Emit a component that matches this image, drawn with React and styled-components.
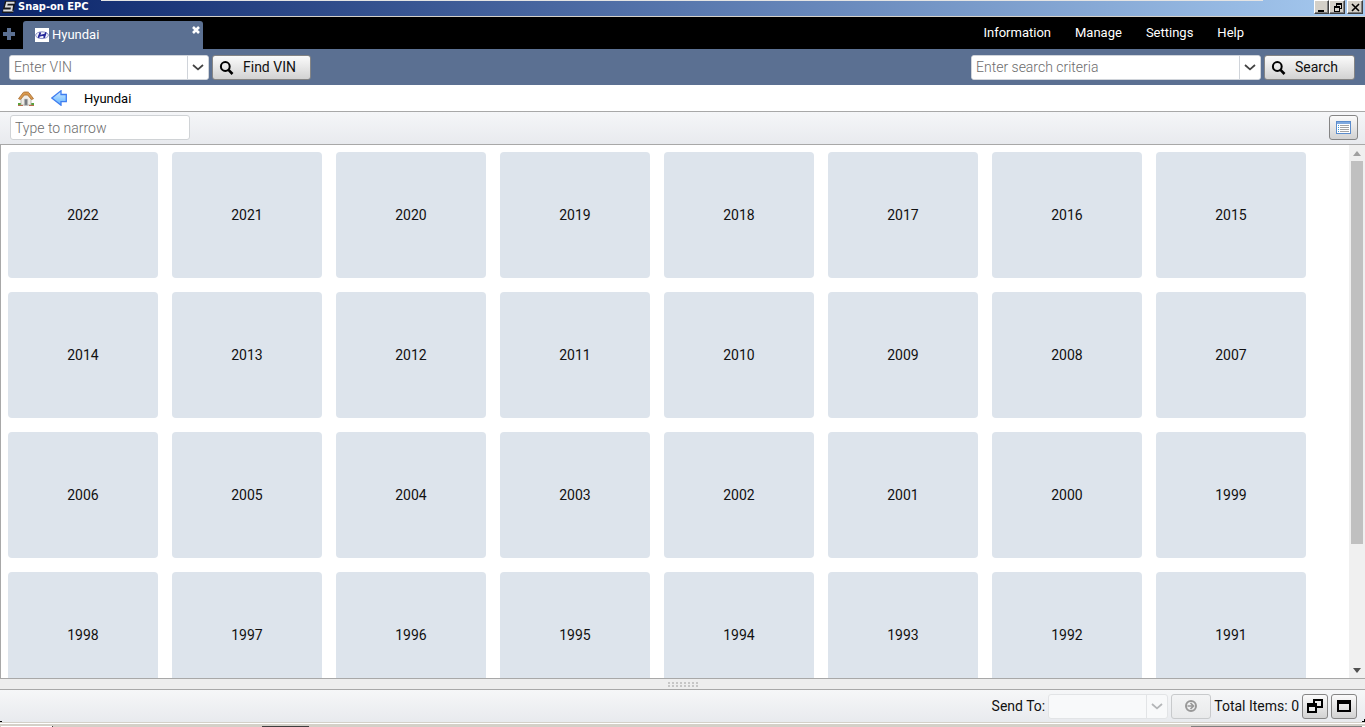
import React from "react";
import styled, { createGlobalStyle, css } from "styled-components";

const GlobalStyle = createGlobalStyle`
  * { box-sizing: border-box; }
  html, body { margin: 0; height: 100%; overflow: hidden; }
  body, button, input, select {
    font-family: Roboto, "Liberation Sans", Arial, sans-serif;
    font-size: 14px;
    color: #111;
  }
  button { padding: 0; cursor: pointer; }
  svg { display: block; flex: none; }
`;

const Window = styled.div`
  display: flex;
  flex-direction: column;
  height: 100vh;
  background: #fff;
`;

const TitleBar = styled.header`
  display: flex;
  align-items: center;
  flex: none;
  height: 17px;
  padding: 0 2px 2px 2px;
  border-bottom: 1px solid #d4d0c8;
  background:
    linear-gradient(#e4e4e4, #e4e4e4) 101px 0 / calc(100% - 203px) 1px no-repeat,
    linear-gradient(90deg, #0a246a, #a6caf0);
`;

const Title = styled.h1`
  flex: 1;
  margin: 0 0 0 2px;
  font: bold 11px/16px "DejaVu Sans Condensed", "DejaVu Sans", sans-serif;
  color: #fff;
`;

const WindowButton = styled.button`
  display: grid;
  place-items: center;
  width: ${(p) => (p.$narrow ? "15px" : "16px")};
  height: 14px;
  margin-left: ${(p) => (p.$apart ? "2px" : "0")};
  border: 1px solid;
  border-color: #fff #404040 #404040 #fff;
  box-shadow: inset -1px -1px 0 #808080;
  background: #d4d0c8;
`;

const TabBar = styled.div`
  display: flex;
  align-items: flex-end;
  flex: none;
  height: 32px;
  background: #000;
`;

const AddTab = styled.button`
  display: grid;
  place-items: center start;
  width: 23px;
  height: 30px;
  padding-left: 3px;
  border: 0;
  background: none;
`;

const Tab = styled.div`
  display: flex;
  gap: 3px;
  width: 180px;
  height: 28px;
  padding: 7px 3px 0 12px;
  border-radius: 3px 3px 0 0;
  background: #5b7092;
`;

const TabName = styled.span`
  flex: 1;
  line-height: 14px;
  font-size: 13px;
  color: #fff;
`;

const CloseTab = styled.button`
  align-self: flex-start;
  height: 8px;
  margin-top: -2px;
  border: 0;
  background: none;
`;

const Menu = styled.nav`
  display: flex;
  gap: 24px;
  margin-left: auto;
  padding-right: 121px;
  height: 32px;
  line-height: 32px;
`;

const MenuLink = styled.a`
  font-size: 13px;
  color: #fff;
  text-decoration: none;
`;

const Toolbar = styled.div`
  display: flex;
  justify-content: space-between;
  flex: none;
  height: 36px;
  padding: 6px 10px 5px 9px;
  background: #5b7092;
`;

const SearchForm = styled.form`
  display: flex;
  gap: 3px;
`;

const ComboBox = styled.div`
  position: relative;
  display: flex;
  width: ${(p) => p.$width};
  height: 25px;
  border: 1px solid ${(p) => (p.$disabled ? "#e2e4e6" : "#d0d4da")};
  border-radius: 3px;
  background: ${(p) => (p.$disabled ? "#f8f9fa" : "#fff")};
  overflow: hidden;
`;

const fieldStyle = css`
  min-width: 0;
  padding: 0 4px;
  outline: none;
  background: #fff;
  font-weight: 300;
  &::placeholder { color: #6c6c6c; opacity: 1; }
`;

const ComboInput = styled.input`
  ${fieldStyle}
  flex: 1;
  padding-bottom: 2px;
  border: 0;
`;

const DropButton = styled.button`
  display: grid;
  place-items: center;
  width: 21px;
  border: 0;
  border-left: 1px solid #d0d4da;
  background: #fff;
`;

const Button = styled.button`
  display: flex;
  align-items: center;
  justify-content: ${(p) => (p.$labelled ? "flex-start" : "center")};
  gap: 9px;
  width: ${(p) => p.$width};
  height: 25px;
  padding: ${(p) => (p.$labelled ? "0 0 1px 6px" : "0")};
  border: 1px solid ${(p) => (p.disabled ? "#c8cacc" : "#858585")};
  border-radius: 3px;
  background: ${(p) =>
    p.disabled ? "linear-gradient(#f3f4f5, #e9eaeb)" : "linear-gradient(#fbfbfb, #d2d2d2)"};
`;

const Breadcrumbs = styled.nav`
  display: flex;
  align-items: center;
  gap: 17px;
  flex: none;
  height: 27px;
  padding-left: 18px;
  border-bottom: 1px solid #a8a8a8;
  font-size: 13px;
`;

const CrumbLink = styled.a`
  color: #000;
  text-decoration: none;
`;

const FilterBar = styled.div`
  display: flex;
  align-items: flex-start;
  justify-content: space-between;
  flex: none;
  height: 33px;
  padding: 3px 7px 0 10px;
  border-bottom: 1px solid #a8a8a8;
  background: linear-gradient(#f5f6f8, #e8eaee);
`;

const FilterInput = styled.input`
  ${fieldStyle}
  width: 180px;
  height: 25px;
  border: 1px solid #d0d3d6;
  border-radius: 3px;
`;

const Content = styled.main`
  display: flex;
  flex: 1;
  min-height: 0;
  border-left: 1px solid #a8a8a8;
`;

const YearGrid = styled.div`
  display: grid;
  grid-template-columns: repeat(auto-fill, 150px);
  grid-auto-rows: 126px;
  gap: 14px;
  flex: 1;
  padding: 7px;
  overflow: hidden;
`;

const YearTile = styled.button`
  border: 0;
  border-radius: 4px;
  background: #dde4ec;
`;

const ScrollBar = styled.div`
  display: flex;
  flex-direction: column;
  width: 16px;
  background: #f0f0f0;
`;

const ScrollArrow = styled.span`
  display: grid;
  place-items: center;
  height: 16px;
`;

const ScrollTrack = styled.div`
  flex: 1;
  padding: 0 2px;
`;

const ScrollThumb = styled.div`
  height: 76.4%;
  background: #c0c0c0;
`;

const Splitter = styled.div`
  display: grid;
  place-items: center;
  flex: none;
  height: 12px;
  border: solid #a8a8a8;
  border-width: 1px 0;
  background: #ededed;
`;

const StatusBar = styled.footer`
  display: flex;
  align-items: center;
  justify-content: flex-end;
  gap: 3px;
  flex: none;
  height: 32px;
  padding-right: 8px;
  background:
    linear-gradient(#000, #000) 0 100% / 2px 1px no-repeat,
    linear-gradient(#000, #000) 100% 100% / 3px 1px no-repeat,
    linear-gradient(#000, #000) 100% calc(100% - 1px) / 1px 2px no-repeat,
    linear-gradient(#f6f7f8, #e8eaee);
`;

const SendSelect = styled.select`
  width: 100%;
  border: 0;
  background: transparent;
  appearance: none;
`;

const DropMark = styled.span`
  position: absolute;
  top: 0;
  right: 0;
  display: grid;
  place-items: center;
  width: 21px;
  height: 23px;
  border-left: 1px solid #e2e4e6;
  pointer-events: none;
`;

const Taskbar = styled.div`
  display: flex;
  align-items: flex-end;
  flex: none;
  height: 5px;
  border-top: 1px solid #d4d0c8;
  box-shadow: inset 0 1px 0 #fff;
  background: #d4d0c8;
`;

const TaskEdge = styled.span`
  width: ${(p) => p.$width};
  height: 1px;
  margin-left: ${(p) => p.$start || "0"};
  background: ${(p) => p.$color};
`;

const Chevron = ({ color = "#444" }) => (
  <svg width="12" height="7" viewBox="0 0 12 7" fill="none" stroke={color} strokeWidth="1.8">
    <path d="M1 1l5 4.4L11 1" />
  </svg>
);

const Magnifier = () => (
  <svg width="15" height="15" viewBox="0 0 15 15" fill="none" stroke="#000">
    <circle cx="6.3" cy="6.5" r="4.4" strokeWidth="2" />
    <path d="M9.5 9.8l4 4.2" strokeWidth="2.6" />
  </svg>
);

const AppLogo = () => (
  <svg width="14" height="12" viewBox="0 0 14 12">
    <path d="M3 0h11l-3 12H0z" fill="#17181c" />
    <path d="M12.5 1.7H5L4 5.5h6L9.4 9.5H1.2" fill="none" stroke="#ddd" strokeWidth="1.9" />
    <path d="M10 10.3h1.5" stroke="#999" />
  </svg>
);

const HyundaiLogo = () => (
  <svg width="14" height="14" viewBox="0 0 14 14">
    <path fill="#fff" d="M0 0h14v14H0z" />
    <ellipse cx="7" cy="7.2" rx="6.4" ry="3.4" fill="#eef0fb" stroke="#8b92c4" strokeWidth="1" />
    <path d="M5.4 4.4L3.4 9.9M10.9 4.4L8.9 9.9M3.2 7.9C6 8.2 8 6.2 11 6.6" fill="none" stroke="#25289a" strokeWidth="1.7" />
  </svg>
);

const House = () => (
  <svg width="16" height="16" viewBox="0 0 16 16">
    <path d="M0 13h5v3H0zM11 13h5v3h-5z" fill="#58a33c" />
    <path d="M3 7l5-4 5 4v8H3z" fill="#f1eee8" stroke="#aaa69d" strokeWidth=".8" />
    <path d="M6.3 9h3.4v6.4H6.3z" fill="#777b80" stroke="#c8c8c8" strokeWidth=".6" />
    <path d="M.5 8.7L5 2.8Q5.4 2 6.5 2h3Q10.5 2 11 2.8l4.5 5.9-2 .8L9.6 5H6.4l-4 4.5z" fill="#d99a50" stroke="#a66a2c" strokeWidth=".8" />
    <path d="M0 15.5h5M11 15.5h5" stroke="#b96c4f" />
  </svg>
);

const BackArrow = () => (
  <svg width="16" height="16" viewBox="0 0 16 16">
    <defs>
      <linearGradient id="arrowFill" x2="0" y2="1">
        <stop stopColor="#d3edff" />
        <stop offset="1" stopColor="#5eb2ff" />
      </linearGradient>
    </defs>
    <path d="M.8 8L10 .8V4.5h5.3v7.2H10v3.5z" fill="url(#arrowFill)" stroke="#3f7df0" strokeWidth="1.3" />
  </svg>
);

const ListView = () => (
  <svg width="15" height="13" viewBox="0 0 15 13" shapeRendering="crispEdges">
    <path d="M0 0h15v13H0z" fill="#5b8ccc" />
    <path d="M1 3h13v9H1z" fill="#fff" />
    <path d="M1 1h13v2H1z" fill="#7fa9df" />
    <path d="M2 4.5h1M2 6.5h1M2 8.5h1M2 10.5h1" stroke="#3b9ade" />
    <path d="M4 4.5h9M4 6.5h9M4 8.5h9M4 10.5h9" stroke="#a3a3a3" />
  </svg>
);

const GoArrow = () => (
  <svg width="12" height="12" viewBox="0 0 12 12" fill="none" stroke="#989898" strokeWidth="2">
    <circle cx="6" cy="6" r="5" />
    <path d="M2.5 6h6M5.5 3L8.5 6l-3 3" strokeWidth="1.7" />
  </svg>
);

const Cascade = () => (
  <svg width="16" height="14" viewBox="0 0 16 14" shapeRendering="crispEdges">
    <path fillRule="evenodd" d="M6 0h10v9H6zM8 2v5h6V2z" />
    <path d="M0 4h10v10H0z" />
    <path d="M2 8h6v4H2z" fill="#ececec" />
  </svg>
);

const Maximize = () => (
  <svg width="14" height="12" viewBox="0 0 14 12" shapeRendering="crispEdges">
    <path fillRule="evenodd" d="M0 0h14v12H0zM2 4v6h10V4z" />
  </svg>
);

const Grip = () => (
  <svg width="30" height="5" viewBox="0 0 30 5" shapeRendering="crispEdges">
    <path d="M0 1h30M0 4h30" stroke="#c6c6c6" strokeWidth="2" strokeDasharray="2 2" />
  </svg>
);

const years = Array.from({ length: 32 }, (_, i) => 2022 - i);
const menuItems = ["Information", "Manage", "Settings", "Help"];

const SearchBox = ({ placeholder, action, boxWidth, buttonWidth }) => (
  <SearchForm onSubmit={(e) => e.preventDefault()}>
    <ComboBox $width={boxWidth}>
      <ComboInput type="text" aria-label={placeholder} placeholder={placeholder} />
      <DropButton type="button" aria-label="Show history"><Chevron /></DropButton>
    </ComboBox>
    <Button type="submit" $labelled $width={buttonWidth}><Magnifier />{action}</Button>
  </SearchForm>
);

export default function App() {
  return (
    <Window>
      <GlobalStyle />
      <TitleBar>
        <AppLogo />
        <Title>Snap-on EPC</Title>
        <WindowButton $narrow aria-label="Minimize">
          <svg width="9" height="9" shapeRendering="crispEdges"><path d="M1 7h6v2H1z" /></svg>
        </WindowButton>
        <WindowButton aria-label="Restore">
          <svg width="9" height="9" fill="none" stroke="#000" shapeRendering="crispEdges">
            <path d="M3 1h6M3 .5h6M3.5 1v2M8.5 1v5M6 5.5h3M1 4h6M1 3.5h6M1.5 4v5M6.5 4v5M1 8.5h6" />
          </svg>
        </WindowButton>
        <WindowButton $apart aria-label="Close">
          <svg width="9" height="9" stroke="#000" strokeWidth="1.6"><path d="M1 1l7 7M8 1L1 8" /></svg>
        </WindowButton>
      </TitleBar>

      <TabBar>
        <AddTab aria-label="New tab">
          <svg width="12" height="12"><path d="M4 0h4v4h4v4H8v4H4V8H0V4h4z" fill="#5b7092" /></svg>
        </AddTab>
        <Tab>
          <HyundaiLogo />
          <TabName>Hyundai</TabName>
          <CloseTab aria-label="Close tab">
            <svg width="8" height="8" stroke="#fff" strokeWidth="2.6"><path d="M1 1l6 6M7 1L1 7" /></svg>
          </CloseTab>
        </Tab>
        <Menu>
          {menuItems.map((item) => <MenuLink href="#" key={item}>{item}</MenuLink>)}
        </Menu>
      </TabBar>

      <Toolbar>
        <SearchBox placeholder="Enter VIN" action="Find VIN" boxWidth="200px" buttonWidth="99px" />
        <SearchBox placeholder="Enter search criteria" action="Search" boxWidth="290px" buttonWidth="91px" />
      </Toolbar>

      <Breadcrumbs>
        <CrumbLink href="#" aria-label="Home"><House /></CrumbLink>
        <CrumbLink href="#" aria-label="Back"><BackArrow /></CrumbLink>
        <CrumbLink href="#">Hyundai</CrumbLink>
      </Breadcrumbs>

      <FilterBar>
        <FilterInput type="text" aria-label="Type to narrow" placeholder="Type to narrow" />
        <Button $width="29px" aria-label="List view"><ListView /></Button>
      </FilterBar>

      <Content>
        <YearGrid>
          {years.map((year) => <YearTile key={year}>{year}</YearTile>)}
        </YearGrid>
        <ScrollBar>
          <ScrollArrow><svg width="8" height="5"><path d="M0 5l4-5 4 5z" fill="#a0a0a0" /></svg></ScrollArrow>
          <ScrollTrack><ScrollThumb /></ScrollTrack>
          <ScrollArrow><svg width="8" height="5"><path d="M0 0l4 5 4-5z" fill="#505050" /></svg></ScrollArrow>
        </ScrollBar>
      </Content>

      <Splitter><Grip /></Splitter>

      <StatusBar>
        <label htmlFor="send-to">Send To:</label>
        <ComboBox $width="120px" $disabled>
          <SendSelect id="send-to" disabled />
          <DropMark><Chevron color="#b4b6b8" /></DropMark>
        </ComboBox>
        <Button $width="40px" disabled aria-label="Send"><GoArrow /></Button>
        <span>Total Items: 0</span>
        <Button $width="26px" aria-label="Cascade windows"><Cascade /></Button>
        <Button $width="26px" aria-label="Maximize panel"><Maximize /></Button>
      </StatusBar>

      <Taskbar>
        <TaskEdge $width="51px" $start="1px" $color="#fff" />
        <TaskEdge $width="1px" $color="#404040" />
        <TaskEdge $width="47px" $start="209px" $color="#404040" />
        <TaskEdge $width="171px" $start="auto" $color="#808080" />
        <TaskEdge $width="3px" $color="#fff" />
      </Taskbar>
    </Window>
  );
}
